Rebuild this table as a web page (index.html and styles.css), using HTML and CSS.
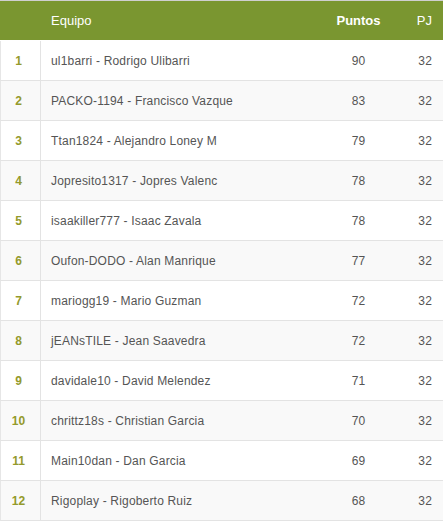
FILE: index.html
```html
<!DOCTYPE html>
<html>
<head>
<meta charset="utf-8">
<link rel="stylesheet" href="styles.css">
</head>
<body>
<table class="standings">
  <colgroup>
    <col class="c-rank"><col class="c-team"><col class="c-pts"><col class="c-pj">
  </colgroup>
  <thead>
    <tr>
      <th class="rank"></th>
      <th class="team">Equipo</th>
      <th class="pts">Puntos</th>
      <th class="pj">PJ</th>
    </tr>
  </thead>
  <tbody>
    <tr><td class="rank">1</td><td class="team">ul1barri - Rodrigo Ulibarri</td><td class="pts">90</td><td class="pj">32</td></tr>
    <tr><td class="rank">2</td><td class="team">PACKO-1194 - Francisco Vazque</td><td class="pts">83</td><td class="pj">32</td></tr>
    <tr><td class="rank">3</td><td class="team">Ttan1824 - Alejandro Loney M</td><td class="pts">79</td><td class="pj">32</td></tr>
    <tr><td class="rank">4</td><td class="team">Jopresito1317 - Jopres Valenc</td><td class="pts">78</td><td class="pj">32</td></tr>
    <tr><td class="rank">5</td><td class="team">isaakiller777 - Isaac Zavala</td><td class="pts">78</td><td class="pj">32</td></tr>
    <tr><td class="rank">6</td><td class="team">Oufon-DODO - Alan Manrique</td><td class="pts">77</td><td class="pj">32</td></tr>
    <tr><td class="rank">7</td><td class="team">mariogg19 - Mario Guzman</td><td class="pts">72</td><td class="pj">32</td></tr>
    <tr><td class="rank">8</td><td class="team">jEANsTILE - Jean Saavedra</td><td class="pts">72</td><td class="pj">32</td></tr>
    <tr><td class="rank">9</td><td class="team">davidale10 - David Melendez</td><td class="pts">71</td><td class="pj">32</td></tr>
    <tr><td class="rank">10</td><td class="team">chrittz18s - Christian Garcia</td><td class="pts">70</td><td class="pj">32</td></tr>
    <tr><td class="rank">11</td><td class="team">Main10dan - Dan Garcia</td><td class="pts">69</td><td class="pj">32</td></tr>
    <tr><td class="rank">12</td><td class="team">Rigoplay - Rigoberto Ruiz</td><td class="pts">68</td><td class="pj">32</td></tr>
  </tbody>
</table>
</body>
</html>
```
FILE: styles.css
```css
html, body {
  margin: 0;
  padding: 0;
  background: #ffffff;
}

.standings {
  width: 443px;
  table-layout: fixed;
  border-collapse: separate;
  border-spacing: 0;
  font-family: "Liberation Sans", Arial, sans-serif;
}

.c-rank { width: 41px; }
.c-team { width: 276px; }
.c-pts { width: 83px; }
.c-pj { width: 43px; }

.standings th {
  height: 39px;
  padding: 0;
  background: #7a9630;
  color: #ffffff;
  font-size: 13px;
  font-weight: normal;
  border-top: 1px solid #cfcfcf;
  border-bottom: 1px solid #ffffff;
  vertical-align: middle;
  box-sizing: border-box;
}

.standings thead th {
  height: 41px;
}

.standings th.team {
  text-align: left;
  padding-left: 10px;
}

.standings th.pts {
  text-align: center;
  font-weight: bold;
}

.standings th.pj {
  text-align: right;
  padding-right: 11px;
}

.standings td {
  height: 40px;
  padding: 0;
  box-sizing: border-box;
  border-bottom: 1px solid #e3e3e3;
  vertical-align: middle;
  font-size: 12px;
  letter-spacing: 0.18px;
  color: #555555;
}

.standings tbody tr:nth-child(even) td {
  background: #f9f9f9;
}

.standings td.rank {
  border-left: 1px solid #e6e6e6;
  border-right: 1px solid #e3e3e3;
  text-align: center;
  padding-right: 4px;
  font-weight: bold;
  color: #949a2c;
  letter-spacing: 0;
}

.standings td.team {
  padding-left: 10px;
  white-space: nowrap;
  overflow: hidden;
}

.standings td.pts {
  text-align: center;
}

.standings td.pj {
  text-align: right;
  padding-right: 11px;
}
```
